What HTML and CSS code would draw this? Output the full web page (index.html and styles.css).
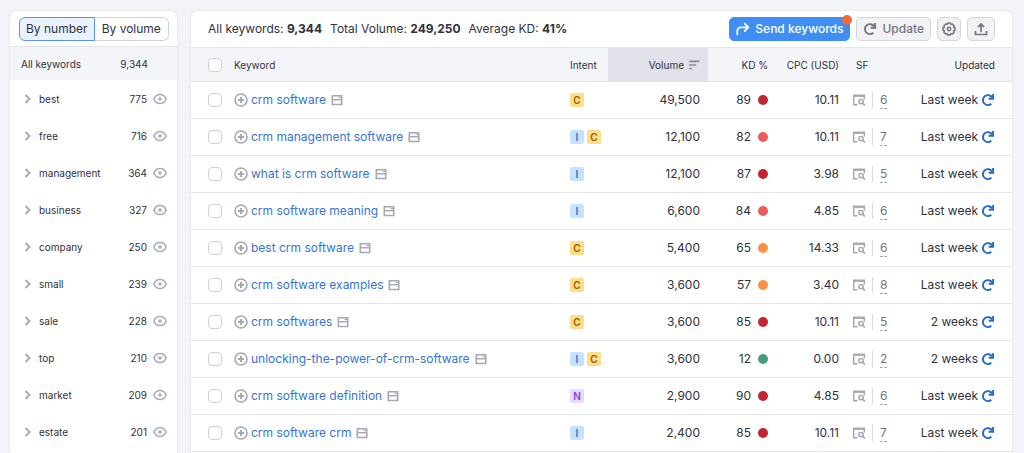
FILE: index.html
```html
<!DOCTYPE html>
<html lang="en">
<head>
    <meta charset="UTF-8">
    <meta name="viewport" content="width=device-width, initial-scale=1.0">
    <title>Keywords</title>
    <link rel="stylesheet" href="styles.css">
</head>
<body>
    <svg class="sprite" aria-hidden="true">
        <symbol id="chevron" viewBox="0 0 8 10"><path d="M1.500 1 5.500 5 1.500 9" fill="none" stroke="currentColor" stroke-width="2"/></symbol>
        <symbol id="eye" viewBox="0 0 14 12"><path d="M.9 6C2 3 4.200 1.500 7 1.500S12 3 13.100 6C12 9 9.800 10.500 7 10.500S2 9 .9 6Z" fill="none" stroke="currentColor" stroke-width="1.600"/><circle cx="7" cy="6" r="1.800" fill="currentColor"/></symbol>
        <symbol id="plus" viewBox="0 0 14 14"><circle cx="7" cy="7" r="6" fill="none" stroke="currentColor" stroke-width="1.600"/><path d="M7 4v6M4 7h6" stroke="currentColor" stroke-width="2"/></symbol>
        <symbol id="page" viewBox="0 0 12 12"><path d="M1.300 1.700h9.400v8.800H1.300z" fill="none" stroke="currentColor" stroke-width="1.600"/><path d="M1 5.700h10" stroke="currentColor" stroke-width="1.500"/><path d="M7.500 3.500h2.500" stroke="currentColor" stroke-width="1"/></symbol>
        <symbol id="serp" viewBox="0 0 14 12"><path d="M5.500 10.800H1.700V1.500h10.600v4" fill="none" stroke="currentColor" stroke-width="1.500"/><path d="M1 .7h12v2.200H1z" fill="currentColor"/><circle cx="9" cy="7.600" r="2.200" fill="none" stroke="currentColor" stroke-width="1.500"/><path d="m10.600 9.200 2.300 2.300" stroke="currentColor" stroke-width="1.700"/></symbol>
        <symbol id="reload" viewBox="0 0 14 14"><path d="M10.300 10.800A5 5 0 1 1 11.200 4.500" fill="none" stroke="currentColor" stroke-width="1.900"/><path d="M12.100 1v4.800H7.700" fill="none" stroke="currentColor" stroke-width="1.900"/></symbol>
        <symbol id="share" viewBox="0 0 14 14"><path d="M1.300 12.600V9.200Q1.300 5.300 5.200 5.300h7M8.700 1.600l3.700 3.700L8.700 9" fill="none" stroke="currentColor" stroke-width="1.800" stroke-linecap="round" stroke-linejoin="round"/></symbol>
        <symbol id="gear" viewBox="0 0 14 14"><path d="M5.700 1h2.600l.5 1.400 1.500-.4 1.800 1.800-.5 1.500 1.400.5v2.500l-1.400.5.5 1.500-1.800 1.800-1.500-.5-.5 1.400H5.700l-.5-1.400-1.500.5-1.800-1.800.5-1.500L1 8.300V5.800l1.400-.5-.5-1.500L3.700 2l1.500.4Z" fill="none" stroke="currentColor" stroke-width="1.500" stroke-linejoin="round"/><circle cx="7" cy="7" r="1.700" fill="none" stroke="currentColor" stroke-width="1.500"/></symbol>
        <symbol id="upload" viewBox="0 0 14 14"><path d="M1.500 9v3.500h11V9M7 10.300V2.200M3.900 5.100 7 2l3.100 3.100" fill="none" stroke="currentColor" stroke-width="1.700"/></symbol>
        <symbol id="sort" viewBox="0 0 12 10"><path d="M1.800 1.400h9M1.800 5h5.700M1.800 8.600h1.400" stroke="currentColor" stroke-width="1.600" stroke-linecap="round"/></symbol>
    </svg>

    <div class="app">
        <aside class="groups">
            <div class="toggle">
                <button type="button" class="active">By number</button>
                <button type="button">By volume</button>
            </div>
            <div class="groups-total"><span>All keywords</span><span class="count">9,344</span></div>
            <ul class="group-list">
                <li><button type="button" aria-label="Expand best"><svg class="chevron"><use href="#chevron"/></svg></button><span>best</span><span class="count">775</span><button type="button" aria-label="Hide best"><svg class="eye"><use href="#eye"/></svg></button></li>
                <li><button type="button" aria-label="Expand free"><svg class="chevron"><use href="#chevron"/></svg></button><span>free</span><span class="count">716</span><button type="button" aria-label="Hide free"><svg class="eye"><use href="#eye"/></svg></button></li>
                <li><button type="button" aria-label="Expand management"><svg class="chevron"><use href="#chevron"/></svg></button><span>management</span><span class="count">364</span><button type="button" aria-label="Hide management"><svg class="eye"><use href="#eye"/></svg></button></li>
                <li><button type="button" aria-label="Expand business"><svg class="chevron"><use href="#chevron"/></svg></button><span>business</span><span class="count">327</span><button type="button" aria-label="Hide business"><svg class="eye"><use href="#eye"/></svg></button></li>
                <li><button type="button" aria-label="Expand company"><svg class="chevron"><use href="#chevron"/></svg></button><span>company</span><span class="count">250</span><button type="button" aria-label="Hide company"><svg class="eye"><use href="#eye"/></svg></button></li>
                <li><button type="button" aria-label="Expand small"><svg class="chevron"><use href="#chevron"/></svg></button><span>small</span><span class="count">239</span><button type="button" aria-label="Hide small"><svg class="eye"><use href="#eye"/></svg></button></li>
                <li><button type="button" aria-label="Expand sale"><svg class="chevron"><use href="#chevron"/></svg></button><span>sale</span><span class="count">228</span><button type="button" aria-label="Hide sale"><svg class="eye"><use href="#eye"/></svg></button></li>
                <li><button type="button" aria-label="Expand top"><svg class="chevron"><use href="#chevron"/></svg></button><span>top</span><span class="count">210</span><button type="button" aria-label="Hide top"><svg class="eye"><use href="#eye"/></svg></button></li>
                <li><button type="button" aria-label="Expand market"><svg class="chevron"><use href="#chevron"/></svg></button><span>market</span><span class="count">209</span><button type="button" aria-label="Hide market"><svg class="eye"><use href="#eye"/></svg></button></li>
                <li><button type="button" aria-label="Expand estate"><svg class="chevron"><use href="#chevron"/></svg></button><span>estate</span><span class="count">201</span><button type="button" aria-label="Hide estate"><svg class="eye"><use href="#eye"/></svg></button></li>
            </ul>
        </aside>

        <main class="keywords">
            <div class="toolbar">
                <div class="summary">
                    <span>All keywords: <b>9,344</b></span>
                    <span>Total Volume: <b>249,250</b></span>
                    <span>Average KD: <b>41%</b></span>
                </div>
                <div class="actions">
                    <button type="button" class="btn primary"><svg class="icon"><use href="#share"/></svg>Send keywords<i class="badge"></i></button>
                    <button type="button" class="btn"><svg class="icon"><use href="#reload"/></svg>Update</button>
                    <button type="button" class="btn square" aria-label="Settings"><svg class="icon"><use href="#gear"/></svg></button>
                    <button type="button" class="btn" aria-label="Export"><svg class="icon"><use href="#upload"/></svg></button>
                </div>
            </div>
            <table>
                <thead>
                    <tr>
                        <th class="check"><input type="checkbox" aria-label="Select all"></th>
                        <th class="keyword">Keyword</th>
                        <th class="intent">Intent</th>
                        <th class="volume"><span>Volume<svg class="sort"><use href="#sort"/></svg></span></th>
                        <th class="kd">KD %</th>
                        <th class="cpc">CPC (USD)</th>
                        <th class="sf">SF</th>
                        <th class="updated">Updated</th>
                    </tr>
                </thead>
                <tbody>
                    <tr>
                        <td class="check"><input type="checkbox" aria-label="crm software"></td>
                        <td><div class="cell"><svg class="plus"><use href="#plus"/></svg><a href="#">crm software</a><svg class="page"><use href="#page"/></svg></div></td>
                        <td><div class="tags"><span class="tag c">C</span></div></td>
                        <td class="volume">49,500</td>
                        <td class="kd"><span>89<i class="dot very-hard"></i></span></td>
                        <td class="cpc">10.11</td>
                        <td class="sf"><div class="cell"><svg class="serp"><use href="#serp"/></svg><span class="features"><a href="#">6</a></span></div></td>
                        <td class="updated"><span>Last week<svg class="reload"><use href="#reload"/></svg></span></td>
                    </tr>
                    <tr>
                        <td class="check"><input type="checkbox" aria-label="crm management software"></td>
                        <td><div class="cell"><svg class="plus"><use href="#plus"/></svg><a href="#">crm management software</a><svg class="page"><use href="#page"/></svg></div></td>
                        <td><div class="tags"><span class="tag i">I</span><span class="tag c">C</span></div></td>
                        <td class="volume">12,100</td>
                        <td class="kd"><span>82<i class="dot hard"></i></span></td>
                        <td class="cpc">10.11</td>
                        <td class="sf"><div class="cell"><svg class="serp"><use href="#serp"/></svg><span class="features"><a href="#">7</a></span></div></td>
                        <td class="updated"><span>Last week<svg class="reload"><use href="#reload"/></svg></span></td>
                    </tr>
                    <tr>
                        <td class="check"><input type="checkbox" aria-label="what is crm software"></td>
                        <td><div class="cell"><svg class="plus"><use href="#plus"/></svg><a href="#">what is crm software</a><svg class="page"><use href="#page"/></svg></div></td>
                        <td><div class="tags"><span class="tag i">I</span></div></td>
                        <td class="volume">12,100</td>
                        <td class="kd"><span>87<i class="dot very-hard"></i></span></td>
                        <td class="cpc">3.98</td>
                        <td class="sf"><div class="cell"><svg class="serp"><use href="#serp"/></svg><span class="features"><a href="#">5</a></span></div></td>
                        <td class="updated"><span>Last week<svg class="reload"><use href="#reload"/></svg></span></td>
                    </tr>
                    <tr>
                        <td class="check"><input type="checkbox" aria-label="crm software meaning"></td>
                        <td><div class="cell"><svg class="plus"><use href="#plus"/></svg><a href="#">crm software meaning</a><svg class="page"><use href="#page"/></svg></div></td>
                        <td><div class="tags"><span class="tag i">I</span></div></td>
                        <td class="volume">6,600</td>
                        <td class="kd"><span>84<i class="dot hard"></i></span></td>
                        <td class="cpc">4.85</td>
                        <td class="sf"><div class="cell"><svg class="serp"><use href="#serp"/></svg><span class="features"><a href="#">6</a></span></div></td>
                        <td class="updated"><span>Last week<svg class="reload"><use href="#reload"/></svg></span></td>
                    </tr>
                    <tr>
                        <td class="check"><input type="checkbox" aria-label="best crm software"></td>
                        <td><div class="cell"><svg class="plus"><use href="#plus"/></svg><a href="#">best crm software</a><svg class="page"><use href="#page"/></svg></div></td>
                        <td><div class="tags"><span class="tag c">C</span></div></td>
                        <td class="volume">5,400</td>
                        <td class="kd"><span>65<i class="dot medium"></i></span></td>
                        <td class="cpc">14.33</td>
                        <td class="sf"><div class="cell"><svg class="serp"><use href="#serp"/></svg><span class="features"><a href="#">6</a></span></div></td>
                        <td class="updated"><span>Last week<svg class="reload"><use href="#reload"/></svg></span></td>
                    </tr>
                    <tr>
                        <td class="check"><input type="checkbox" aria-label="crm software examples"></td>
                        <td><div class="cell"><svg class="plus"><use href="#plus"/></svg><a href="#">crm software examples</a><svg class="page"><use href="#page"/></svg></div></td>
                        <td><div class="tags"><span class="tag c">C</span></div></td>
                        <td class="volume">3,600</td>
                        <td class="kd"><span>57<i class="dot medium"></i></span></td>
                        <td class="cpc">3.40</td>
                        <td class="sf"><div class="cell"><svg class="serp"><use href="#serp"/></svg><span class="features"><a href="#">8</a></span></div></td>
                        <td class="updated"><span>Last week<svg class="reload"><use href="#reload"/></svg></span></td>
                    </tr>
                    <tr>
                        <td class="check"><input type="checkbox" aria-label="crm softwares"></td>
                        <td><div class="cell"><svg class="plus"><use href="#plus"/></svg><a href="#">crm softwares</a><svg class="page"><use href="#page"/></svg></div></td>
                        <td><div class="tags"><span class="tag c">C</span></div></td>
                        <td class="volume">3,600</td>
                        <td class="kd"><span>85<i class="dot very-hard"></i></span></td>
                        <td class="cpc">10.11</td>
                        <td class="sf"><div class="cell"><svg class="serp"><use href="#serp"/></svg><span class="features"><a href="#">5</a></span></div></td>
                        <td class="updated"><span>2 weeks<svg class="reload"><use href="#reload"/></svg></span></td>
                    </tr>
                    <tr>
                        <td class="check"><input type="checkbox" aria-label="unlocking-the-power-of-crm-software"></td>
                        <td><div class="cell"><svg class="plus"><use href="#plus"/></svg><a href="#">unlocking-the-power-of-crm-software</a><svg class="page"><use href="#page"/></svg></div></td>
                        <td><div class="tags"><span class="tag i">I</span><span class="tag c">C</span></div></td>
                        <td class="volume">3,600</td>
                        <td class="kd"><span>12<i class="dot easy"></i></span></td>
                        <td class="cpc">0.00</td>
                        <td class="sf"><div class="cell"><svg class="serp"><use href="#serp"/></svg><span class="features"><a href="#">2</a></span></div></td>
                        <td class="updated"><span>2 weeks<svg class="reload"><use href="#reload"/></svg></span></td>
                    </tr>
                    <tr>
                        <td class="check"><input type="checkbox" aria-label="crm software definition"></td>
                        <td><div class="cell"><svg class="plus"><use href="#plus"/></svg><a href="#">crm software definition</a><svg class="page"><use href="#page"/></svg></div></td>
                        <td><div class="tags"><span class="tag n">N</span></div></td>
                        <td class="volume">2,900</td>
                        <td class="kd"><span>90<i class="dot very-hard"></i></span></td>
                        <td class="cpc">4.85</td>
                        <td class="sf"><div class="cell"><svg class="serp"><use href="#serp"/></svg><span class="features"><a href="#">6</a></span></div></td>
                        <td class="updated"><span>Last week<svg class="reload"><use href="#reload"/></svg></span></td>
                    </tr>
                    <tr>
                        <td class="check"><input type="checkbox" aria-label="crm software crm"></td>
                        <td><div class="cell"><svg class="plus"><use href="#plus"/></svg><a href="#">crm software crm</a><svg class="page"><use href="#page"/></svg></div></td>
                        <td><div class="tags"><span class="tag i">I</span></div></td>
                        <td class="volume">2,400</td>
                        <td class="kd"><span>85<i class="dot very-hard"></i></span></td>
                        <td class="cpc">10.11</td>
                        <td class="sf"><div class="cell"><svg class="serp"><use href="#serp"/></svg><span class="features"><a href="#">7</a></span></div></td>
                        <td class="updated"><span>Last week<svg class="reload"><use href="#reload"/></svg></span></td>
                    </tr>
                </tbody>
            </table>
        </main>
    </div>
</body>
</html>
```
FILE: styles.css
```css
* {
    box-sizing: border-box;
}
body {
    margin: 0;
    font-family: Inter, sans-serif;
    font-size: 12px;
    line-height: 16px;
    color: #2f323d;
    background-color: #f3f4f9;
}
button {
    font: inherit;
    color: inherit;
    padding: 0;
    border: 0;
    background: none;
    cursor: pointer;
}
svg {
    display: block;
    flex: none;
}
.sprite {
    position: absolute;
    width: 0;
    height: 0;
}
.app {
    display: flex;
    gap: 14px;
    height: 100vh;
    padding: 11px 12px 0 10px;
    overflow: hidden;
}
.groups, .keywords {
    background-color: white;
    border-radius: 6px 6px 0 0;
    box-shadow: 0 0 2px rgba(25,27,35,0.16);
}

/* Sidebar */
.groups {
    flex: none;
    width: 167px;
    font-size: 10px;
}
.toggle {
    display: flex;
    padding: 6px 8px 5px 9px;
    border-bottom: 1px solid #e4e5ec;
}
.toggle button {
    flex: 1;
    height: 24px;
    font-size: 12px;
    border: 1px solid #cfd1dc;
    border-left: 0;
    border-radius: 0 6px 6px 0;
}
.toggle .active {
    border: 1px solid #5c94e0;
    border-radius: 6px 0 0 6px;
    background-color: #e9f2ff;
}
.groups-total {
    display: flex;
    align-items: center;
    height: 33px;
    padding: 0 29px 0 11px;
    background-color: #f4f5f9;
}
.count {
    margin-left: auto;
}
.group-list {
    margin: 0;
    padding: 0;
    list-style: none;
}
.group-list li {
    display: flex;
    align-items: center;
    height: 37px;
    padding: 0 10px 0 14px;
}
.chevron {
    width: 8px;
    height: 10px;
    margin-right: 7px;
    color: #a9abb8;
}
.eye {
    width: 14px;
    height: 12px;
    margin-left: 6px;
    color: #a9abb8;
}

/* Toolbar */
.keywords {
    flex: 1;
    min-width: 0;
}
.toolbar {
    display: flex;
    align-items: center;
    justify-content: space-between;
    height: 36px;
    padding: 0 17px;
}
.summary {
    display: flex;
    gap: 8px;
}
.summary b {
    font-weight: 700;
}
.actions {
    display: flex;
    gap: 6px;
}
.btn {
    position: relative;
    display: flex;
    align-items: center;
    justify-content: center;
    gap: 5px;
    height: 24px;
    padding: 0 6px;
    font-weight: 500;
    color: #737581;
    border: 1px solid #d3d4dc;
    border-radius: 5px;
    background-color: #f2f2f4;
}
.btn.primary {
    color: white;
    border-color: #3e8ef4;
    background-color: #3e8ef4;
}
.btn.square {
    padding: 0 4px;
}
.badge {
    position: absolute;
    top: -3px;
    right: -3px;
    width: 10px;
    height: 10px;
    border-radius: 50%;
    background-color: #ef6c3a;
}
.icon {
    width: 14px;
    height: 14px;
}

/* Table */
table {
    width: 100%;
    table-layout: fixed;
    border-collapse: separate;
    border-spacing: 0;
}
th {
    height: 35px;
    padding: 0;
    font-size: 10px;
    font-weight: 400;
    text-align: left;
    background-color: #f4f5f9;
    border-top: 1px solid #e6e7ee;
    border-bottom: 1px solid #dfe0e8;
}
td {
    height: 37px;
    padding: 0;
    border-bottom: 1px solid #e4e5ec;
}
.check {
    width: 43px;
    padding-left: 17px;
}
.check input {
    display: block;
    appearance: none;
    width: 14px;
    height: 14px;
    margin: 0;
    border: 1px solid #cfd1da;
    border-radius: 4px;
    background-color: white;
}
.cell, .tags, .volume span, .kd span, .updated span {
    display: flex;
    align-items: center;
}
.keyword {
    width: auto;
}
.plus {
    width: 14px;
    height: 14px;
    margin-right: 3px;
    color: #a6a8b4;
}
.cell a {
    color: #3575d3;
    text-decoration: none;
}
.page {
    width: 12px;
    height: 12px;
    margin-left: 5px;
    color: #a6a8b4;
}
.intent {
    width: 38px;
}
.tags {
    gap: 3px;
}
.tag {
    width: 14px;
    height: 14px;
    font-size: 10px;
    font-weight: 600;
    line-height: 14px;
    text-align: center;
    border-radius: 2px;
}
.tag.c { color: #a75800; background-color: #fbdf88; }
.tag.i { color: #2a70cc; background-color: #c5e3ff; }
.tag.n { color: #7a45d6; background-color: #e8d8ff; }
.volume {
    width: 100px;
    padding-right: 8px;
    text-align: right;
}
th.volume {
    background-color: #e0e1e9;
}
.volume span, .kd span, .updated span {
    justify-content: flex-end;
}
.sort {
    width: 12px;
    height: 10px;
    margin-left: 4px;
    color: #868a99;
}
.kd {
    width: 60px;
    text-align: right;
}
.dot {
    width: 10px;
    height: 10px;
    margin-left: 7px;
    border-radius: 50%;
}
.dot.very-hard { background-color: #c12533; }
.dot.hard { background-color: #ee5a5c; }
.dot.medium { background-color: #fb9146; }
.dot.easy { background-color: #439f7f; }
.cpc {
    width: 71px;
    text-align: right;
}
.sf {
    width: 61px;
    padding-left: 13px;
}
th.sf {
    padding-left: 17px;
}
.serp {
    width: 14px;
    height: 12px;
    color: #a6a8b4;
}
.features {
    margin-left: 6px;
    padding-left: 7px;
    border-left: 1px solid #d8dae2;
}
.features a {
    padding-bottom: 1px;
    color: #737581;
    border-bottom: 1px dashed #9a9ca8;
}
.updated {
    width: 112px;
    padding-right: 17px;
    text-align: right;
}
.reload {
    width: 14px;
    height: 14px;
    margin-left: 3px;
    color: #2569c9;
}
```
